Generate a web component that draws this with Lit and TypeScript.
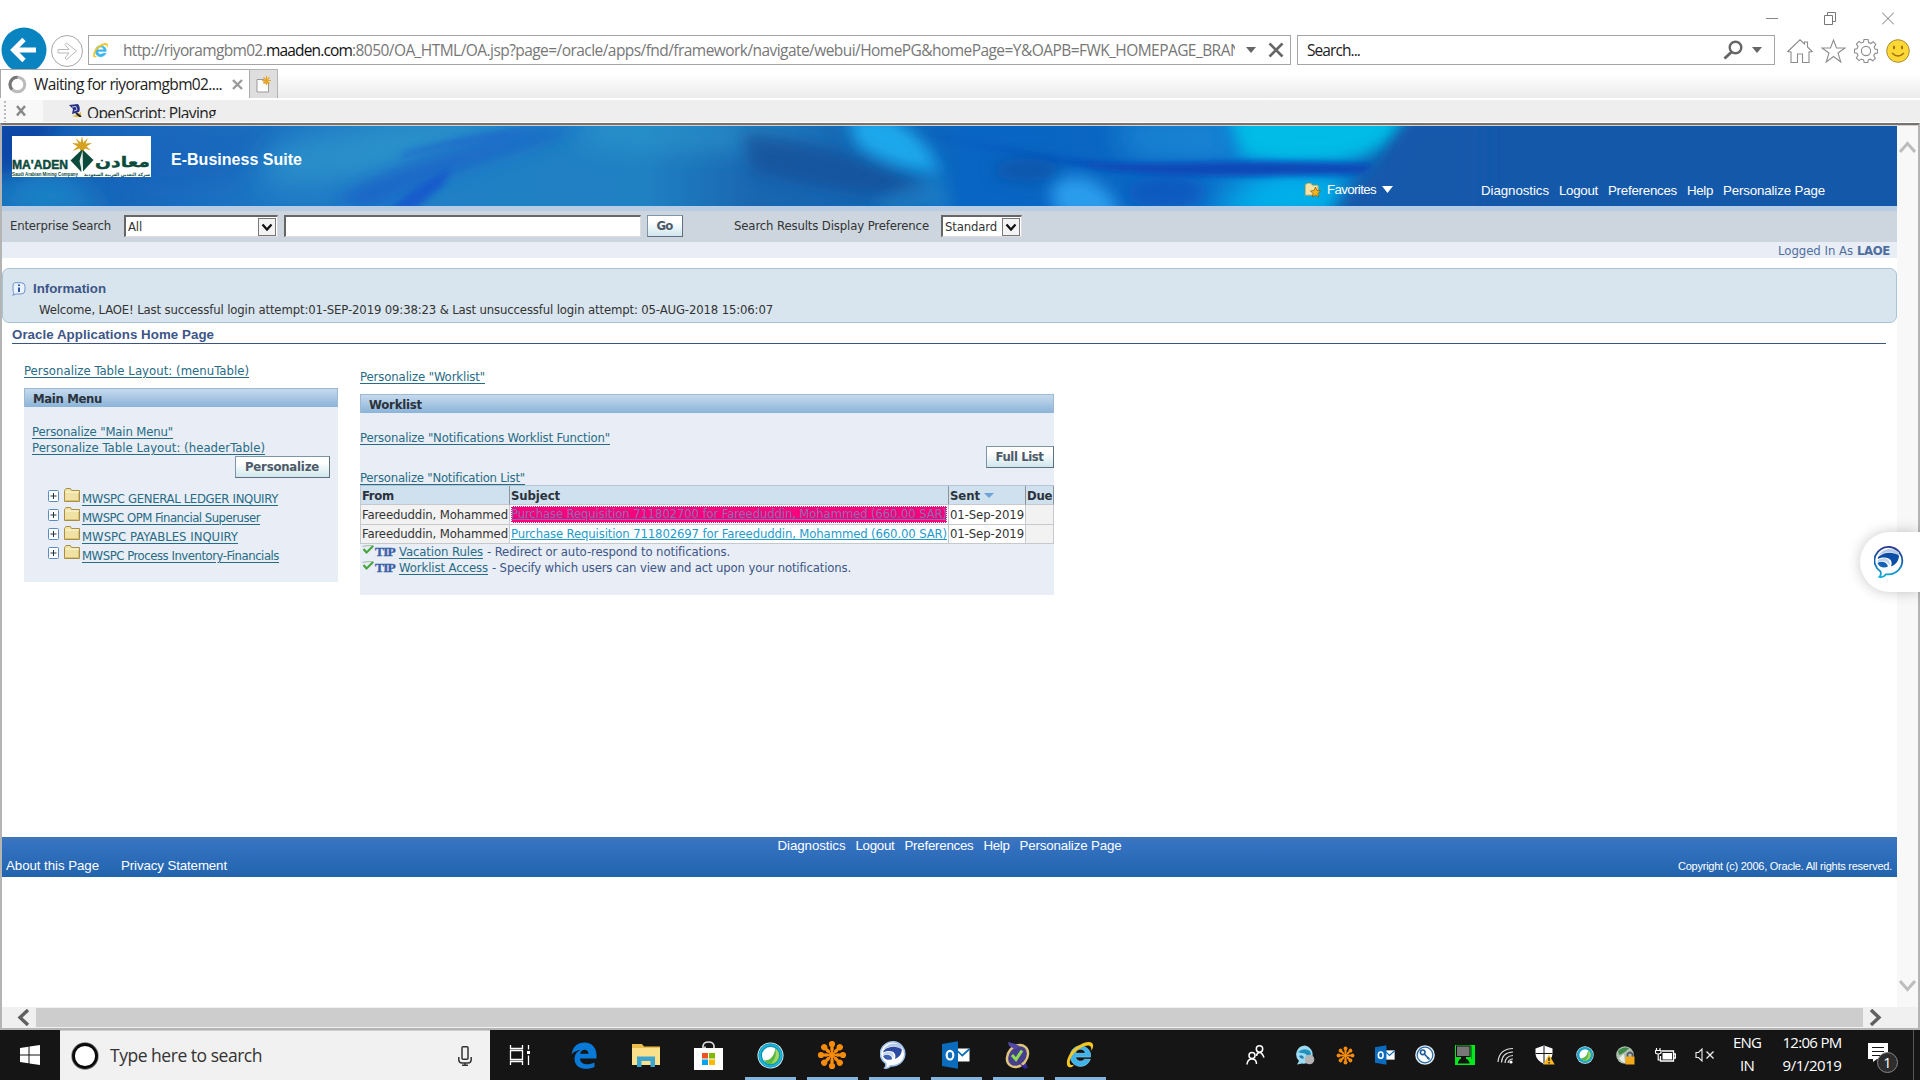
import { LitElement, html, css, svg } from "lit";
import { customElement, property, state } from "lit/decorators.js";
import { styleMap } from "lit/directives/style-map.js";

/** A run of text tracked to an exact measure. */
@customElement("fit-text")
class FitText extends LitElement {
  @property({ type: Number }) w = 0;
  @property() t = "";
  @state() private spacing = 0;
  static styles = css`
    :host { display: inline-block; white-space: pre; flex: none; }
  `;
  firstUpdated() {
    const span = this.renderRoot.querySelector("span")!;
    const natural = span.getBoundingClientRect().width;
    if (this.w) this.spacing = (this.w - natural) / this.t.length;
  }
  render() {
    return html`<span style=${styleMap({ letterSpacing: `${this.spacing}px` })}>${this.t}</span>`;
  }
}

const T = (t: string, w: number, c = "") => html`<fit-text class=${c} .t=${t} .w=${w}></fit-text>`;

const ieGlyph = (s: number) => html`<svg width=${s} height=${s} viewBox="0 0 32 32">
  <path d="M27 20.5A11 11 0 1 1 27.2 14.5L27.2 18.2H11.2A5.4 5.4 0 0 0 20.8 20.5Z M11.2 14.2H21.8A5.4 5.4 0 0 0 11.2 14.2Z" fill="#3fb4ea" fill-rule="evenodd" stroke="#8fdcf8" stroke-width=".6"/>
  <path d="M4.5 29C-1 27 3 14 12 7.500S30 0 30 6C30 8 29 10 28 11.500C28.500 7 27 4.500 21 6.500C12 9.500 3 20 5.500 25.500C6.200 27 8 27 10 26C8 28.500 6.500 29.600 4.500 29Z" fill="#f3c623"/>
</svg>`;

const webex = (s: number) => html`<svg width=${s} height=${s} viewBox="0 0 28 28">
  <circle cx="14" cy="14" r="13.500" fill="#e8f6fb"/><circle cx="14" cy="14" r="12.600" fill="#0b93b8"/>
  <circle cx="14" cy="14" r="11" fill="none" stroke="#23b9dc" stroke-width="1.500"/>
  <circle cx="14" cy="14" r="8.800" fill="#fff"/><path d="M19 6.800A8.800 8.800 0 1 1 7 19C14 20 18 14 19 6.800Z" fill="#58b947"/>
  <path d="M19 6.800A8.800 8.800 0 0 1 22.800 14C22 19 19 22 14 22.800C19 19 20.500 13 19 6.800Z" fill="#a5d867"/>
</svg>`;

const flower = (s: number) => html`<svg width=${s} height=${s} viewBox="-15 -15 30 30">
  ${[0, 45, 90, 135, 180, 225, 270, 315].map(
    (a) => svg`<g transform="rotate(${a})"><path d="M-.8 0L-1.300 -9H1.300L.8 0Z" fill="#f78c0a"/><circle cy="-11" r="3.100" fill="#f78c0a"/><ellipse cy="-6" rx="1.700" ry="3" fill="#f78c0a"/></g>`
  )}<circle r="2.600" fill="#f78c0a"/>
</svg>`;

const jabber = (s: number, dark: string, mid: string, ring: string) => html`<svg width=${s} height=${s} viewBox="0 0 32 32">
  <defs><linearGradient id="ring" x1="0" y1="0" x2="0" y2="1"><stop offset="0" stop-color="#2a3b90"/><stop offset=".5" stop-color="#1562ac"/><stop offset="1" stop-color="#12b0dc"/></linearGradient></defs>
  <path d="M16 1A14 13.500 0 1 1 12 28.300C10.500 30.500 8 31.500 5.500 30.800C7 29.500 7.200 28 6.500 25.500A14 13.500 0 0 1 16 1Z" fill="#fff" stroke=${ring} stroke-width="1.800"/>
  <path d="M4 10C9 1.500 19 1 25 6.500L24.500 9.500C19 5 10 5.500 4 10Z" fill="#b9c9e8"/>
  <path d="M4 11C10 5.500 19 5.500 25 9.500C25 15 21.500 19 17 20.500C20 13.500 13 9 3.800 13Z" fill=${dark}/>
  <path d="M3.500 14.500C9 10.500 17 12 15.500 19.500C13 14.500 8 14 3.500 16.500Z" fill="#c4d4ee"/>
  <path d="M3.500 17C7.500 14.500 13 15.500 14 20.500C10.500 22.500 5 21.500 3.500 17Z" fill=${mid}/>
</svg>`;

const outlook = (s: number) => html`<svg width=${s} height=${s} viewBox="0 0 28 28">
  <path d="M13 7.500H27.500V20.500H13Z" fill="#fff"/><path d="M14 8.500L20.300 14.500L27.500 8" fill="none" stroke="#0b6cbd" stroke-width="1.700"/>
  <path d="M0 3L16 .3V27.700L0 25Z" fill="#0b6cbd"/>
  <ellipse cx="8" cy="14.200" rx="3.300" ry="4.300" fill="none" stroke="#fff" stroke-width="2.200"/>
</svg>`;

const folder = html`<svg class="folder" width="16" height="14" viewBox="0 0 16 14">
  <path d="M.5 13.500V2.500L2 .5H6.500L7.500 2.500H15.500V13.500Z" fill="#efe2a4" stroke="#a98f45"/>
  <path d="M1.500 4H14.500" stroke="#fff9dc"/><path d="M1.500 12.500H14.500V5" stroke="#d8c278" fill="none"/></svg>`;
const plus = html`<svg width="11" height="12" viewBox="0 0 11 12"><rect x=".5" y=".5" width="10" height="11" rx="1" fill="#fff" stroke="#5a8bc4"/><path d="M2.500 6H8.500M5.500 3V9" stroke="#234"/></svg>`;
const check = html`<svg class="ck" width="12" height="10" viewBox="0 0 12 10"><path d="M.5 1.500C4 .5 8 .5 11.500 1" stroke="#9cb8a4" fill="none"/><path d="M1.500 4L4.500 7.500L11.200 1" fill="none" stroke="#4aa53c" stroke-width="2.200"/></svg>`;
const chevron = html`<svg class="chev" width="18" height="18" viewBox="0 0 18 18"><rect x=".5" y=".5" width="17" height="17" fill="#f3f3f3" stroke="#777"/><path d="M4.500 6.500L9 11.500L13.500 6.500" fill="none" stroke="#111" stroke-width="2.300"/></svg>`;
const tri = (w: number, h: number, f: string) => html`<svg width=${w} height=${h} viewBox="0 0 10 6" preserveAspectRatio="none"><path d="M0 0H10L5 6Z" fill=${f}/></svg>`;

const logo = html`<svg class="logo" width="139" height="41" viewBox="0 0 139 41">
  <rect width="139" height="41" fill="#fff"/>
  <path d="M70 0L71.300 6.500L76 2L73.500 7.500L80 7L74.500 10.500L79 14.500L73 12.500L70 17L67.500 12.500L60.500 15L65.500 10.500L60 7L66.500 7.500L63.500 2L68.700 6.500Z" fill="#d6a021"/>
  <path d="M70 13.500L58.500 24.500L69.300 36Z" fill="#0c4b3c"/><path d="M70.500 13.500L81.500 24L71 35.500Z" fill="#0c4b3c"/>
  <path d="M70.200 16L67.500 25L69.800 35Z" fill="#e9f1ee"/>
  <text x="0" y="33" textLength="56" lengthAdjust="spacingAndGlyphs" font-family="Liberation Sans" font-weight="700" font-size="13.500" fill="#0c4b3c" stroke="#0c4b3c" stroke-width=".5">MA'ADEN</text>
  <text x="138" y="31" text-anchor="end" direction="ltr" textLength="55" lengthAdjust="spacingAndGlyphs" font-family="DejaVu Sans" font-weight="700" font-size="15" fill="#0c4b3c" stroke="#0c4b3c" stroke-width=".4">معادن</text>
  <text x="0" y="40" textLength="66" lengthAdjust="spacingAndGlyphs" font-family="Liberation Sans" font-weight="700" font-size="5.500" fill="#0c4b3c">Saudi Arabian Mining Company</text>
  <text x="138" y="39.500" text-anchor="end" textLength="66" lengthAdjust="spacingAndGlyphs" font-family="DejaVu Sans" font-weight="700" font-size="4.500" fill="#0c4b3c">شركة التعدين العربية السعودية</text>
</svg>`;

const bannerArt = html`<svg class="art" viewBox="0 0 1895 80" preserveAspectRatio="none">
  <defs>
    <linearGradient id="b" x1="0" x2="1895" y1="0" y2="0" gradientUnits="userSpaceOnUse">
      <stop offset="0" stop-color="#1667b8"/><stop offset=".03" stop-color="#145eb4"/><stop offset=".1" stop-color="#1b6fc2"/>
      <stop offset=".2" stop-color="#2180c6"/><stop offset=".34" stop-color="#1f80c2"/><stop offset=".4" stop-color="#1965b0"/>
      <stop offset=".47" stop-color="#1267b4"/><stop offset=".51" stop-color="#0865c4"/><stop offset=".58" stop-color="#0a66c2"/>
      <stop offset=".64" stop-color="#0d74cc"/><stop offset=".68" stop-color="#0a90dc"/><stop offset=".71" stop-color="#0d6cc0"/>
      <stop offset=".735" stop-color="#1458aa"/><stop offset="1" stop-color="#1458aa"/>
    </linearGradient>
    <filter id="s" x="-60%" y="-100%" width="220%" height="300%"><feGaussianBlur stdDeviation="15"/></filter>
    <filter id="m" x="-60%" y="-100%" width="220%" height="300%"><feGaussianBlur stdDeviation="8"/></filter>
    <filter id="t" x="-60%" y="-100%" width="220%" height="300%"><feGaussianBlur stdDeviation="3"/></filter>
  </defs>
  <rect width="1895" height="80" fill="url(#b)"/>
  <path d="M-10 -10H60L20 50H-10Z" fill="#0b46a6" filter="url(#m)"/>
  <path d="M0 60L60 45L110 90H0Z" fill="#1b86c8" filter="url(#s)"/>
  <path d="M160 -10H300L230 60H130Z" fill="#1560b8" opacity=".5" filter="url(#s)"/>
  <path d="M270 20L420 -5H560L420 45L260 60Z" fill="#2d96cc" opacity=".8" filter="url(#s)"/>
  <path d="M330 75Q380 40 450 22T590 -4L540 18Q440 48 370 84Z" fill="#1257c8" opacity=".6" filter="url(#m)"/>
  <path d="M385 86Q410 60 450 42L440 60L405 90Z" fill="#1458cc" opacity=".9" filter="url(#t)"/>
  <path d="M400 26Q440 14 475 8L540 0L500 14Q450 20 400 32Z" fill="#1a5fcb" opacity=".5" filter="url(#t)"/>
  <path d="M560 -5H760L850 12L720 20H600Z" fill="#2f9bd0" opacity=".8" filter="url(#s)"/>
  <path d="M740 6Q840 18 932 60L920 76Q820 66 750 44Z" fill="#125099" opacity=".75" filter="url(#m)"/>
  <path d="M845 -10H890Q925 12 940 48Q890 44 855 20Z" fill="#1ba8ec" filter="url(#m)"/>
  <path d="M870 78L938 45L952 86H880Z" fill="#2488cc" opacity=".6" filter="url(#m)"/>
  <ellipse cx="1025" cy="44" rx="34" ry="12" fill="#0853a6" opacity=".8" filter="url(#m)"/>
  <path d="M1048 64Q1060 46 1085 52Q1115 66 1118 92H1056Z" fill="#2c9cec" filter="url(#m)"/>
  <ellipse cx="1165" cy="66" rx="40" ry="18" fill="#0a55bd" opacity=".8" filter="url(#m)"/>
  <path d="M1110 -5H1220L1230 30H1130Z" fill="#2490d8" opacity=".7" filter="url(#s)"/>
  <path d="M1225 -16H1420Q1390 24 1350 34Q1290 42 1240 30Z" fill="#00bce6" filter="url(#m)"/>
  <path d="M1205 95L1255 50L1320 44Q1370 58 1345 95Z" fill="#00b2ea" filter="url(#s)"/>
  <path d="M880 -2Q990 22 1060 33Q1110 39 1200 36T1370 38L1365 48Q1200 54 1110 45Q1010 28 880 -2Z" fill="#0848b8" filter="url(#t)"/>
  <path d="M1405 -10H1480V95H1325Q1345 55 1380 40Z" fill="#1458aa" filter="url(#m)"/>
</svg>`;

@customElement("app-root")
class AppRoot extends LitElement {
  static styles = css`
    :host { display: block; width: 1920px; height: 1080px; overflow: hidden; background: #fff; font: 13px/16px "DejaVu Sans Condensed", "DejaVu Sans", sans-serif; color: #333; }
    * { box-sizing: border-box; }
    svg { display: block; flex: none; }
    .row { display: flex; align-items: center; }
    .ui { font-family: "Open Sans", "Noto Sans", sans-serif; font-size: 15.500px; }
    .arial { font-family: "Liberation Sans", Arial, sans-serif; color: #fff; font-size: 13.300px; }
    .b { font-weight: 700; }
    .link { color: #276b85; text-decoration: underline; text-underline-offset: 1.500px; text-decoration-thickness: 1px; }

    .title { height: 29px; justify-content: flex-end; padding-right: 26px; gap: 46px; padding-top: 7px; }
    .nav { height: 40px; padding: 0 8px 0 1px; align-items: flex-start; }
    .back { overflow: hidden; height: 42px; margin-top: -2px; }
    .fwd { margin: 5px 4px 0 2px; }
    .box { border: 1px solid #a5a5a5; height: 30px; background: #fff; margin-top: 6px; }
    .addr { width: 1203px; padding-left: 3px; }
    .url { width: 1112px; overflow: hidden; margin-left: 14px; white-space: nowrap; color: #777; line-height: 24px; display: flex; }
    .dom { color: #111; }
    .addr .tri { margin: 0 12px 0 11px; }
    .find { width: 478px; margin-left: 6px; padding: 0 12px 0 9px; color: #222; gap: 9px; }
    .grow { flex: 1; }
    .tools { gap: 8px; margin: 10px 0 0 12px; }

    .tabs { height: 29px; background: linear-gradient(#fff 15%, #ebebeb); align-items: stretch; }
    .tab { width: 250px; border: 1px solid #aaa; border-bottom: 0; background: #fff; padding: 0 7px 0 7px; color: #222; }
    .tab fit-text { margin: 0 10px 0 7px; }
    .new { width: 28px; background: #dedede; border: 1px solid #b4b4b4; border-left: 0; border-bottom: 0; justify-content: center; }
    .tool { height: 25px; border-top: 2px solid #fff; background: #eee; border-bottom: 1px solid #fff; align-items: flex-start; }
    .grip { width: 43px; height: 22px; background: #f8f8f8; }
    .grip svg { margin-left: 3px; }
    .osico { margin: 4px 0 0 26px; }
    .clip { height: 17px; overflow: hidden; margin: 1px 0 0 5px; line-height: 25px; color: #222; }

    .frame { height: 907px; border-top: 2px solid #737373; border-left: 2px solid #b4b4b4; border-right: 2px solid #b4b4b4; border-bottom: 2px solid #b4b4b4; display: flex; flex-direction: column; }
    .view { display: flex; height: 882px; border-top: 1px solid #d9cfc6; }
    .page { width: 1895px; display: flex; flex-direction: column; }
    .vbar { width: 21px; background: #f8f8f8; display: flex; flex-direction: column; justify-content: space-between; align-items: center; padding: 15px 0 15px; }
    .hbar { height: 21px; background: #f0f0f0; padding-left: 15px; }
    .thumb { width: 1827px; height: 19px; background: #cdcdcd; margin: 0 6px 0 6px; }

    .banner { height: 80px; position: relative; align-items: flex-start; padding-left: 10px; }
    .art { position: absolute; inset: 0; width: 100%; height: 100%; }
    .logo, .brand, .fav, .menu { z-index: 1; }
    .logo { margin-top: 10px; }
    .brand { font-size: 16px; margin: 25px 0 0 20px; line-height: 18px; }
    .fav { margin: 55px 0 0 auto; gap: 6px; line-height: 17px; }
    .menu { gap: 10px; }
    .banner .menu { margin: 57px 72px 0 88px; }

    .search { height: 36px; background: #cdd6df; border-top: 5px solid #b8cce4; padding: 0 0 1px 8px; }
    .field { height: 22px; background: #fff; border: 1px solid #ddd; border-top: 2px solid #666; border-left: 2px solid #666; padding: 0 1px 0 2px; justify-content: space-between; color: #333; }
    .sel1 { width: 154px; margin-left: 13px; }
    .inp { width: 357px; margin-left: 6px; }
    .sel2 { width: 81px; margin-left: 12px; }
    .btn { display: flex; align-items: center; justify-content: center; height: 22px; border: 1px solid #7d95a8; border-right-color: #5f7180; border-bottom-color: #5f7180; background: linear-gradient(#fff 30%, #cfe6ec); color: #4d5a68; font-weight: 700; padding-right: 1px; }
    .go { width: 36px; margin: 0 51px 0 6px; }
    .who { height: 16px; background: #e9eef6; justify-content: flex-end; padding: 1px 7px 0 0; color: #4f6f9f; gap: 4px; }

    .info { margin-top: 10px; height: 55px; background: #d9e5ee; border: 1px solid #a8c3d3; border-radius: 7px; padding: 11px 0 0 9px; }
    .info .row { gap: 7px; height: 18px; }
    .navy { color: #3d5687; }
    .info .msg { margin: 4px 0 0 27px; }
    .h1 { margin: 3px 11px 0 10px; height: 18px; border-bottom: 1px solid #3c5580; line-height: 18px; }
    .cols { display: flex; padding-left: 22px; gap: 22px; align-items: flex-start; }
    .left { width: 314px; padding-top: 19px; }
    .right { width: 694px; padding-top: 25px; }
    .panel { background: #e9eef6; margin-top: 9px; }
    .ph { height: 19px; background: linear-gradient(#c6daee, #8bb3d8); border: 1px solid #9dbad3; border-bottom: 0; padding: 2px 0 0 8px; font-weight: 700; color: #2b323b; line-height: 15px; }
    .left .panel { height: 194px; }
    .right .panel { height: 201px; }
    .pl { display: flex; flex-direction: column; padding: 17px 8px 0 8px; height: 49px; }
    .pers { width: 95px; margin: 0 0 0 211px; }
    .tree { padding: 9px 0 0 24px; }
    .tree .row { height: 19px; align-items: flex-start; }
    .tree svg { margin-top: 3px; }
    .tree .folder { margin: 1px 2px 0 5px; }
    .tree fit-text { margin-top: 4px; }
    .nwf { padding-top: 17px; height: 33px; }
    .full { width: 68px; margin-left: 626px; }
    .nl { padding-top: 2px; height: 17px; }

    .grid { display: grid; grid-template-columns: 149px 439px 77px 28px; grid-auto-rows: 19.300px; border-top: 1px solid #b5c5d2; border-left: 1px solid #c5c8cc; }
    .c { background: #f2f2f2; border-right: 1px solid #c5c8cc; border-bottom: 1px solid #c5c8cc; padding: 1px 0 0 1px; display: flex; align-items: center; gap: 4px; white-space: nowrap; }
    .th { background: #cfe0ee; font-weight: 700; color: #2b323b; border-right-color: #8d9399; }
    .w { background: #fff; }
    .hot { background: #f7047c; color: #8a6cb4; text-decoration: underline; outline: 1px dotted #dff; outline-offset: -1px; height: 17px; line-height: 16px; }
    .cy { color: #1f9bcb; text-decoration: underline; }
    .tip { height: 16px; padding-left: 2px; color: #3d5687; }
    .tip .ck { margin-bottom: 4px; }
    .tip .k { font: 700 13.500px/16px "Liberation Serif", serif; color: #3c62a8; -webkit-text-stroke: .4px #3c62a8; margin: 0 4px 0 1px; letter-spacing: 0; }
    .tip .link { margin-right: 4px; }

    .foot { margin-top: auto; margin-bottom: 130px; height: 40px; background: linear-gradient(#3f77ba, #3672c2 15%, #2164ad); padding: 0 5px 0 4px; display: flex; flex-direction: column; }
    .foot .menu { justify-content: center; height: 18px; margin-left: 1px; }
    .foot .low { height: 21px; justify-content: space-between; }
    .foot .low .menu { margin: 0; gap: 22px; }
    .small { font-size: 11px; }

    .bar { height: 50px; background: #151515; color: #fff; }
    .start { width: 60px; padding-left: 20px; }
    .type { width: 430px; height: 50px; background: #f1f1f1; border-top: 1px solid #ccc; padding: 0 18px 0 11px; color: #333; }
    .type fit-text { font-size: 17.500px; margin-left: 11px; line-height: 24px; padding-bottom: 1px; }
    .tv { margin: 0 32px 0 19px; }
    .app { width: 62px; height: 50px; display: flex; justify-content: center; align-items: center; }
    .app.first { width: 41px; margin-right: 11px; }
    .run { background: linear-gradient(#85b5dc, #85b5dc) 50% 100% / 51px 3px no-repeat; }
    .tray { margin-left: 123px; }
    .ti { width: 40px; display: flex; justify-content: center; }
    .ti.first { width: 42px; margin-right: 9px; }
    .clock { display: flex; flex-direction: column; align-items: center; line-height: 23px; font-size: 15px; height: 48px; }
    .lang { margin-left: 2px; width: 40px; }
    .time { margin-left: 10px; width: 70px; }
    .note { margin-left: 21px; width: 30px; padding-top: 12px; height: 50px; }
    .edge { margin-left: 15px; width: 1px; height: 50px; background: #555; }

    .float { position: absolute; left: 1860px; top: 532px; width: 60px; height: 60px; background: #fff; border-radius: 30px 0 0 30px; box-shadow: 0 0 14px rgba(0,0,0,.22); padding: 14px 0 0 14px; }
  `;

  private menu = () => html`<div class="row menu arial">
    ${T("Diagnostics", 68)}${T("Logout", 39)}${T("Preferences", 69)}${T("Help", 26)}${T("Personalize Page", 102)}
  </div>`;

  render() {
    const tree: [string, number][] = [["MWSPC GENERAL LEDGER INQUIRY", 196], ["MWSPC OPM Financial Superuser", 178], ["MWSPC PAYABLES INQUIRY", 156], ["MWSPC Process Inventory-Financials", 197]];
    return html`
    <div class="row title">
      <svg width="12" height="13"><path d="M0 6.500H12" stroke="#888"/></svg>
      <svg width="12" height="13" viewBox="0 0 12 13"><path d="M.5 3.500H8.500V12.500H.5ZM3.500 3.500V.5H11.500V9.500H8.500" fill="none" stroke="#777"/></svg>
      <svg width="12" height="13" viewBox="0 0 12 13"><path d="M0 .5L12 12.500M12 .5L0 12.500" stroke="#777"/></svg>
    </div>
    <div class="row nav ui">
      <svg class="back" width="46" height="42" viewBox="0 0 46 42"><circle cx="23" cy="23" r="22.500" fill="#0a84c1"/><path d="M35 23H14M23 12.500L12.500 23L23 33.500" fill="none" stroke="#fff" stroke-width="4.800"/></svg>
      <svg class="fwd" width="35" height="34" viewBox="0 0 35 34"><circle cx="18" cy="17" r="15.500" fill="#fff" stroke="#a8a8a8"/><path d="M9 15.500H20L16 10.500L17.500 9L27.500 17L17.500 25.500L16 24L20 19H9Z" fill="#fff" stroke="#b8b8b8"/></svg>
      <div class="row box addr">${ieGlyph(17)}
        <div class="url">${T("http://riyoramgbm02.", 143)}${T("maaden.com", 86, "dom")}${T(":8050/OA_HTML/OA.jsp?page=/oracle/apps/fnd/framework/navigate/webui/HomePG&homePage=Y&OAPB=FWK_HOMEPAGE_BRAN", 889)}</div>
        <div class="tri">${tri(10, 6, "#666")}</div>
        <svg width="16" height="16" viewBox="0 0 16 16"><path d="M1.500 1.500L14.500 14.500M14.500 1.500L1.500 14.500" stroke="#666" stroke-width="2.600"/></svg>
      </div>
      <div class="row box find">${T("Search...", 53)}<span class="grow"></span>
        <svg width="20" height="20" viewBox="0 0 20 20"><circle cx="12.500" cy="7.500" r="5.800" fill="none" stroke="#666" stroke-width="2.400"/><path d="M8.500 12L1.500 18.500" stroke="#666" stroke-width="3"/></svg>${tri(10, 6, "#666")}
      </div>
      <div class="row tools">
        <svg width="26" height="24" viewBox="0 0 26 24"><path d="M.8 12.500L13 .8L17.500 5V3H20.500V8L25.200 12.500L22 13V23.500H15.500V15H10.500V23.500H4V13Z" fill="#fff" stroke="#8d8d8d" stroke-width="1.100"/></svg>
        <svg width="25" height="24" viewBox="0 0 25 24"><path d="M12.500 1L15.500 9H24L17 14L19.800 23L12.500 17.500L5.200 23L8 14L1 9H9.500Z" fill="#fff" stroke="#8d8d8d" stroke-width="1.100"/></svg>
        <svg width="24" height="24" viewBox="-12 -12 24 24"><path d="M-2 -11.500H2L2.600 -8.500L4.800 -7.500L7.300 -9.300L9.800 -6.600L8.200 -4L9 -2L11.500 -1.500V2L8.800 2.600L7.800 4.800L9.300 7.300L6.800 9.800L4.200 8.200L2.300 9L1.800 11.500H-1.800L-2.400 8.800L-4.500 8L-7 9.600L-9.700 7L-8 4.500L-9 2.300L-11.500 1.800V-1.800L-8.900 -2.300L-8 -4.600L-9.600 -7L-7 -9.600L-4.600 -8L-2.500 -8.800Z" fill="#fff" stroke="#8d8d8d" stroke-width="1.100"/><circle r="4.600" fill="#fff" stroke="#8d8d8d" stroke-width="1.100"/></svg>
        <svg width="24" height="24" viewBox="0 0 24 24"><circle cx="12" cy="12" r="11.300" fill="#fdd835" stroke="#a98a3a"/><ellipse cx="8" cy="8.500" rx="1" ry="2" fill="#9a6a10"/><ellipse cx="16" cy="8.500" rx="1" ry="2" fill="#9a6a10"/><path d="M6 14Q12 20 18 14" fill="none" stroke="#9a6a10" stroke-width="1.300"/></svg>
      </div>
    </div>
    <div class="row tabs ui">
      <div class="row tab"><svg width="19" height="19" viewBox="0 0 19 19"><circle cx="9.500" cy="9.500" r="7.300" fill="none" stroke="#bbb" stroke-width="3"/><path d="M9.500 2.200A7.300 7.300 0 0 0 4 14.500" fill="none" stroke="#777" stroke-width="3"/></svg>${T("Waiting for riyoramgbm02....", 188)}
        <svg width="11" height="11" viewBox="0 0 11 11"><path d="M1 1L10 10M10 1L1 10" stroke="#999" stroke-width="2.300"/></svg></div>
      <div class="row new"><svg width="15" height="17" viewBox="0 0 15 17"><path d="M1 3.500H8V7H12.500V16H1Z" fill="#fff" stroke="#999"/><path d="M10.500 0V9M6 4.500H15M7.500 1.500L13.500 7.500M13.500 1.500L7.500 7.500" stroke="#eba51f" stroke-width="1.200"/></svg></div>
    </div>
    <div class="row tool ui">
      <div class="row grip"><svg width="24" height="22" viewBox="0 0 24 22"><path d="M2 1V22" stroke="#bbb" stroke-width="2" stroke-dasharray="2 2"/><path d="M14 6L22 15.500M22 6L14 15.500" stroke="#888" stroke-width="2.500"/></svg></div>
      <svg class="osico" width="13" height="13" viewBox="0 0 13 13"><path d="M0 1L9 0Q12 4 10 8L3 10L4 5Z" fill="#2a2d86"/><path d="M3 3L7 2.500L8 6L5 7" fill="none" stroke="#bcd"/><path d="M0 10Q6 14 12 8V13H6Z" fill="#e8b91c"/><path d="M7 9L12 13" stroke="#223" stroke-width="2"/></svg>
      <div class="clip">${T("OpenScript: Playing", 129)}</div>
    </div>
    <div class="frame">
      <div class="view">
        <div class="page">
          <div class="row banner">${bannerArt}${logo}
            <div class="arial b brand">${T("E-Business Suite", 131)}</div>
            <div class="row fav arial"><svg width="16" height="14" viewBox="0 0 16 14"><path d="M.5 12V2L2 .5H6L7.500 2.500H13V12Z" fill="#f7e3a8" stroke="#d9b35a"/><path d="M10.500 4L12 7.500L15.500 8L13 10.500L13.600 14L10.500 12.200L7.400 14L8 10.500L5.500 8L9 7.500Z" fill="#f7b51b" stroke="#7a5a10" stroke-width=".7"/></svg>${T("Favorites", 49)}${tri(11, 7, "#fff")}</div>
            ${this.menu()}
          </div>
          <div class="row search">${T("Enterprise Search", 101)}
            <div class="row field sel1">${T("All", 14)}${chevron}</div>
            <div class="field inp"></div>
            <div class="btn go">${T("Go", 16)}</div>
            ${T("Search Results Display Preference", 195)}
            <div class="row field sel2">${T("Standard", 52)}${chevron}</div>
          </div>
          <div class="row who">${T("Logged In As", 75)}${T("LAOE", 33, "b")}</div>
          <div class="info">
            <div class="row navy"><svg width="14" height="14" viewBox="0 0 14 14"><path d="M3 .7H9Q13 .7 13 4.500V8Q13 12 9 12H4L.7 13.300L2 11Q1 10 1 8V4Q1 .7 3 .7Z" fill="#eaf2fb" stroke="#6f93cf"/><path d="M7 5.500V10M7 2.500V4" stroke="#2d56a8" stroke-width="2"/></svg><div class="arial b">${T("Information", 73, "navy")}</div></div>
            <div class="msg">${T("Welcome, LAOE! Last successful login attempt:01-SEP-2019 09:38:23 & Last unsuccessful login attempt: 05-AUG-2018 15:06:07", 734)}</div>
          </div>
          <div class="arial b h1">${T("Oracle Applications Home Page", 202, "navy")}</div>
          <div class="cols">
            <div class="left">
              ${T("Personalize Table Layout: (menuTable)", 225, "link")}
              <div class="panel">
                <div class="ph">${T("Main Menu", 69)}</div>
                <div class="pl">${T('Personalize "Main Menu"', 141, "link s")}${T("Personalize Table Layout: (headerTable)", 233, "link s")}</div>
                <div class="btn pers">${T("Personalize", 74)}</div>
                <div class="tree">${tree.map(([t, w]) => html`<div class="row">${plus}${folder}${T(t, w, "link")}</div>`)}</div>
              </div>
            </div>
            <div class="right">
              ${T('Personalize "Worklist"', 125, "link")}
              <div class="panel">
                <div class="ph">${T("Worklist", 53)}</div>
                <div class="nwf">${T('Personalize "Notifications Worklist Function"', 250, "link")}</div>
                <div class="btn full">${T("Full List", 48)}</div>
                <div class="nl">${T('Personalize "Notification List"', 165, "link")}</div>
                <div class="grid">
                  <div class="c th">${T("From", 32)}</div><div class="c th">${T("Subject", 49)}</div><div class="c th">${T("Sent", 30)}${tri(10, 5, "#6fa3d8")}</div><div class="c th">${T("Due", 25)}</div>
                  <div class="c">${T("Fareeduddin, Mohammed", 146)}</div><div class="c w">${T("Purchase Requisition 711802700 for Fareeduddin, Mohammed (660.00 SAR)", 436, "hot")}</div><div class="c w">${T("01-Sep-2019", 74)}</div><div class="c"></div>
                  <div class="c">${T("Fareeduddin, Mohammed", 146)}</div><div class="c w">${T("Purchase Requisition 711802697 for Fareeduddin, Mohammed (660.00 SAR)", 436, "cy")}</div><div class="c w">${T("01-Sep-2019", 74)}</div><div class="c"></div>
                </div>
                <div class="row tip">${check}${T("TIP", 20, "k")}${T("Vacation Rules", 84, "link")}${T("- Redirect or auto-respond to notifications.", 243)}</div>
                <div class="row tip">${check}${T("TIP", 20, "k")}${T("Worklist Access", 89, "link")}${T("- Specify which users can view and act upon your notifications.", 359)}</div>
              </div>
            </div>
          </div>
          <div class="foot arial">
            ${this.menu()}
            <div class="row low"><div class="row menu">${T("About this Page", 93)}${T("Privacy Statement", 106)}</div>${T("Copyright (c) 2006, Oracle. All rights reserved.", 214, "small")}</div>
          </div>
        </div>
        <div class="vbar">
          <svg width="17" height="12" viewBox="0 0 17 12"><path d="M1 11L8.500 2.500L16 11" fill="none" stroke="#bdbdbd" stroke-width="3"/></svg>
          <svg width="17" height="12" viewBox="0 0 17 12"><path d="M1 1L8.500 9.500L16 1" fill="none" stroke="#bdbdbd" stroke-width="3"/></svg>
        </div>
      </div>
      <div class="row hbar">
        <svg width="13" height="17" viewBox="0 0 13 17"><path d="M11 1L3 8.500L11 16" fill="none" stroke="#606060" stroke-width="3.400"/></svg>
        <div class="thumb"></div>
        <svg width="13" height="17" viewBox="0 0 13 17"><path d="M2 1L10 8.500L2 16" fill="none" stroke="#606060" stroke-width="3.400"/></svg>
      </div>
    </div>
    <div class="row bar ui">
      <div class="start"><svg width="20" height="20" viewBox="0 0 20 20"><path d="M0 3L8.500 1.700V9.500H0ZM9.500 1.500L20 0V9.500H9.500ZM0 10.500H8.500V18.300L0 17ZM9.500 10.500H20V20L9.500 18.500Z" fill="#fff"/></svg></div>
      <div class="row type">
        <svg width="28" height="28" viewBox="0 0 28 28"><circle cx="14" cy="14" r="11.700" fill="none" stroke="#777" stroke-width="4"/><circle cx="14" cy="14" r="11.500" fill="#fff" stroke="#0a0a0a" stroke-width="2.800"/></svg>
        ${T("Type here to search", 152)}<span class="grow"></span>
        <svg width="14" height="20" viewBox="0 0 14 20"><rect x="4" y=".8" width="6" height="12.500" rx="1" fill="none" stroke="#333" stroke-width="1.500"/><path d="M.8 11V14Q1 17 4 17H10Q13 17 13.200 14V11M7 17V19.500M4 19.300H10" fill="none" stroke="#333" stroke-width="1.500"/></svg>
      </div>
      <svg class="tv" width="22" height="20" viewBox="0 0 22 20"><path d="M1.500 0V3.500H13.500V0M1.500 5.500H13.500V14.500H1.500ZM1.500 20V16.500H13.500V20M19.500 0V4.500M19.500 10.500V20" fill="none" stroke="#fff" stroke-width="1.300"/><rect x="18" y="6" width="3" height="3" fill="#fff"/></svg>
      <div class="app first"><svg width="26" height="27" viewBox="0 0 26 27"><path d="M.5 12.500C2 4 7 .5 13.500 .5C21 .5 25.500 6 25.500 13V16.500H9C9.200 23 17.500 23.500 23.500 20.500V25C15 29 3.500 26.500 3.500 17C3.500 12.500 6 9.500 9.500 8C7 8 2.500 9.500 .5 12.500ZM9.200 11.800H17.500C17.500 6.500 10 6.500 9.200 11.800Z" fill="#0a7ad8" fill-rule="evenodd"/></svg></div>
      <div class="app"><svg width="28" height="24" viewBox="0 0 28 24"><path d="M0 1H10L12 3.500H28V22H0Z" fill="#e9bd4b"/><path d="M0 5H28V22H0Z" fill="#fbe08c"/><path d="M5 24V13.500H23V24H18.500V18H9.500V24Z" fill="#3ba4cf"/></svg></div>
      <div class="app"><svg width="29" height="29" viewBox="0 0 29 29"><path d="M9 8V5Q9.500 1 14.500 1T20 5V8M11 8V5.500" fill="none" stroke="#ddd" stroke-width="1.700"/><path d="M0 7H29V29H0Z" fill="#fff"/><path d="M8 12H14V17.500H8Z" fill="#f05025"/><path d="M15 12H21V17.500H15Z" fill="#7fba00"/><path d="M8 18.500H14V24H8Z" fill="#00a4ef"/><path d="M15 18.500H21V24H15Z" fill="#ffb900"/></svg></div>
      <div class="app run">${webex(27)}</div><div class="app run">${flower(30)}</div><div class="app run">${jabber(28, "#2c4ba0", "#3c62b4", "#9fc0ea")}</div><div class="app run">${outlook(28)}</div>
      <div class="app run"><svg width="26" height="29" viewBox="0 0 26 29"><path d="M3 1L13 3.500L23 27L17 26Z" fill="#36308c"/><ellipse cx="12.500" cy="15" rx="12" ry="9.500" transform="rotate(-50 12.500 15)" fill="#473f8d" stroke="#e0c67c" stroke-width="2.400"/><path d="M7 14L11 18.500L17 9.500" fill="none" stroke="#8fdb52" stroke-width="3"/><path d="M3 1L14 4.500L11 8.500L4 5Z" fill="#5249a5"/><path d="M14 22L20 28.500L21 26Z" fill="#2d1fa8"/></svg></div>
      <div class="app run">${ieGlyph(30)}</div>
      <div class="row tray">
        <div class="ti first"><svg width="19" height="20" viewBox="0 0 19 20"><g fill="none" stroke="#fff" stroke-width="1.500"><circle cx="6" cy="10.500" r="3"/><path d="M1 19.500Q1.500 14 6 14T10.500 19"/><circle cx="13.500" cy="4" r="3.200"/><path d="M10.500 11Q11 7.500 13.500 7.500T18 12.500"/></g></svg></div>
        <div class="ti"><svg width="20" height="20" viewBox="0 0 20 20"><path d="M10 .5A9 9 0 1 1 7 18.500L2 19.500L4 16A9 9 0 0 1 10 .5Z" fill="#9bdcf2"/><path d="M3 7Q9 2 15 6Q18 11 12 13Q13 8 6 8Z" fill="#2491bd"/><path d="M4 11Q8 9 9 13Q6 15 4 11Z" fill="#2a7fae"/><circle cx="14.500" cy="14.500" r="4.800" fill="#b4b4b4"/></svg></div>
        <div class="ti">${flower(19)}</div><div class="ti">${outlook(20)}</div>
        <div class="ti"><svg width="20" height="20" viewBox="0 0 20 20"><circle cx="10" cy="10" r="9.800" fill="#e3eef7"/><circle cx="10" cy="10" r="7.800" fill="#fff" stroke="#2e6da4" stroke-width="1.200"/><circle cx="7.700" cy="7.300" r="2.300" fill="none" stroke="#1f5f9c" stroke-width="1.600"/><path d="M9.300 9L14.500 14.500M12.500 14L14 12.500" stroke="#1f5f9c" stroke-width="1.700"/></svg></div>
        <div class="ti"><svg width="20" height="20" viewBox="0 0 20 20"><rect width="20" height="20" fill="#00e91a"/><rect x="1.500" y="1" width="13.500" height="10.500" fill="#777" stroke="#111"/><path d="M6 12H11V14H6ZM3 17L5 14H12L14.500 17V18.500H3Z" fill="#111"/><path d="M16.500 1V14" stroke="#0a8f14"/></svg></div>
        <div class="ti"><svg width="17" height="17" viewBox="0 0 17 17"><g fill="none" stroke="#ddd" stroke-width="1.200"><path d="M1 15Q2 2 16 1.500M4.500 15.500Q5 5.500 16 5M8 16Q8.500 9 16 8.500M11 16Q11.500 12 16 12"/></g><circle cx="14" cy="15" r="1.600" fill="#fff"/></svg></div>
        <div class="ti"><svg width="20" height="20" viewBox="0 0 20 20"><path d="M9 .5L17.500 3.500V9Q17 15 9 19Q1 15 .5 9V3.500Z" fill="#fff"/><path d="M9 1V18M.5 8.500H17.500" stroke="#151515"/><path d="M14 9.500L19.700 19.500H8.300Z" fill="#f8b81e"/><path d="M14 12.500V16M14 17V18.500" stroke="#222" stroke-width="1.400"/></svg></div>
        <div class="ti">${webex(18)}</div>
        <div class="ti"><svg width="19" height="19" viewBox="0 0 19 19"><circle cx="9" cy="9" r="8.800" fill="#aebfae"/><path d="M2 5Q7 0 13 2Q9 7 3 9Z" fill="#3f8a4a"/><path d="M3 12L8 8L9 17Q5 16 3 12Z" fill="#e7ece7"/><path d="M11.500 11V8Q14 5 16.500 8V11" fill="none" stroke="#556" stroke-width="1.800"/><rect x="9.500" y="10.500" width="9" height="8" fill="#f3a81c"/></svg></div>
        <div class="ti"><svg width="21" height="14" viewBox="0 0 21 14"><path d="M1.500 0V2M5 0V2M.5 2.500H6V5Q3 7 .5 5ZM3.200 6V12H5.500" fill="none" stroke="#fff" stroke-width="1.200"/><path d="M7 3H18.500V13H5.500V8M19 6H20.300V10H19" fill="none" stroke="#fff" stroke-width="1.300"/><rect x="7.500" y="5" width="9.500" height="6.500" fill="#fff"/></svg></div>
        <div class="ti"><svg width="20" height="14" viewBox="0 0 20 14"><path d="M1 4.500H3.500L7 1V13L3.500 9.500H1Z" fill="none" stroke="#eee" stroke-width="1.100"/><path d="M11.500 3.500L18.500 10.500M18.500 3.500L11.500 10.500" stroke="#eee" stroke-width="1.300"/></svg></div>
        <div class="clock lang">${T("ENG", 28)}${T("IN", 14)}</div>
        <div class="clock time">${T("12:06 PM", 59)}${T("9/1/2019", 59)}</div>
        <div class="note"><svg width="34" height="32" viewBox="0 0 34 32"><path d="M0 1H20V17H9L5 20V17H0Z" fill="#fff"/><path d="M4 5.500H16M4 9.500H16M4 13.500H13" stroke="#151515" stroke-width="1.200"/><circle cx="19.500" cy="20.500" r="10" fill="#2d2d2d" stroke="#888"/><text x="19.500" y="26" text-anchor="middle" font-family="Open Sans" font-size="14.500" fill="#fff">1</text></svg></div>
        <div class="edge"></div>
      </div>
    </div>
    <div class="float">${jabber(32, "#0b4fa6", "#1463b8", "url(#ring)")}</div>`;
  }
}
